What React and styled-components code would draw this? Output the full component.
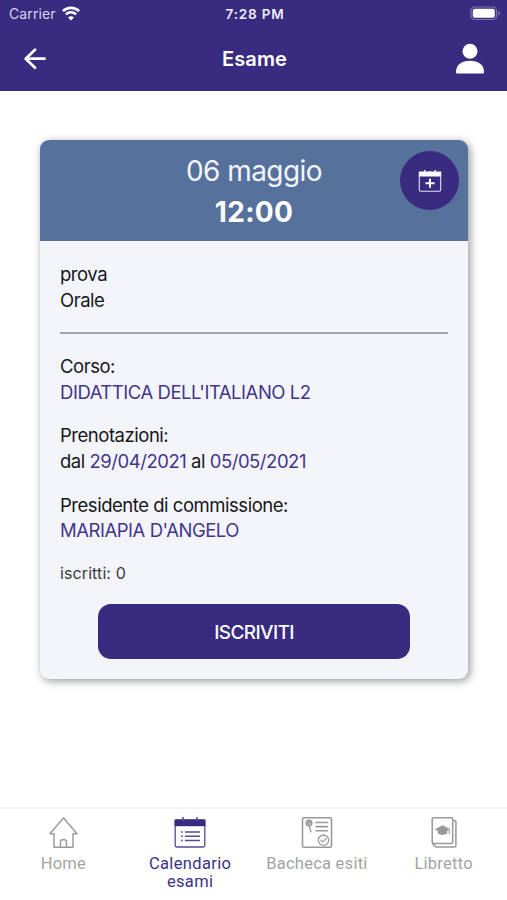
import styled, { createGlobalStyle } from 'styled-components';

const GlobalStyle = createGlobalStyle`
  * {
    box-sizing: border-box;
  }
  body {
    margin: 0;
    background: #fff;
    font-family: Inter, "Liberation Sans", sans-serif;
  }
`;

const Screen = styled.div`
  height: 900px;
  display: flex;
  flex-direction: column;
  background: #fff;
`;

const Header = styled.header`
  height: 91px;
  flex: none;
  background: #382b80;
  color: #fff;
`;

const StatusBar = styled.div`
  display: grid;
  grid-template-columns: 1fr auto 1fr;
  align-items: center;
  height: 27px;
  padding: 0 6px 0 9px;
  font-size: 14px;
  line-height: 26px;
`;

const Carrier = styled.div`
  display: flex;
  align-items: center;
  gap: 6px;
  color: #d8d3ee;
  letter-spacing: 0.1px;

  svg {
    margin-bottom: 1px;
  }
`;

const Clock = styled.div`
  padding-top: 1px;
  font-size: 13.5px;
  font-weight: 600;
  letter-spacing: 0.8px;
  color: #efedf8;
`;

const Battery = styled.svg`
  justify-self: end;
`;

const NavBar = styled.div`
  display: grid;
  grid-template-columns: 1fr auto 1fr;
  align-items: center;
  height: 63px;
  padding: 0 22px 0 24px;
`;

const Title = styled.h1`
  margin: 0;
  font-size: 20px;
  line-height: 24px;
  font-weight: 600;
  letter-spacing: 0.1px;
`;

const ProfileIcon = styled.svg`
  justify-self: end;
`;

const Main = styled.main`
  flex: 1;
  padding: 49px 39px 0 40px;
`;

const Card = styled.section`
  height: 539px;
  border-radius: 9px;
  background: #f4f5fa;
  box-shadow: 2px 2px 8px rgba(0, 0, 0, 0.42);
`;

const CardHeader = styled.div`
  position: relative;
  height: 101px;
  padding-top: 11px;
  border-radius: 9px 9px 0 0;
  background: #56719c;
  color: #fff;
  text-align: center;
`;

const Day = styled.div`
  font-size: 28px;
  line-height: 41px;
  font-weight: 400;
  letter-spacing: -0.55px;
  color: #f3f5fa;
`;

const Hour = styled.div`
  font-size: 28px;
  line-height: 41px;
  font-weight: 700;
  letter-spacing: 0.3px;
`;

const AddButton = styled.button`
  position: absolute;
  top: 11px;
  right: 9px;
  width: 59px;
  height: 59px;
  padding: 0;
  border: none;
  border-radius: 50%;
  background: #382b80;
  display: flex;
  align-items: center;
  justify-content: center;
`;

const CardBody = styled.div`
  padding: 21px 20px 0;
  display: flex;
  flex-direction: column;
`;

const Line = styled.div`
  font-size: 18.5px;
  line-height: 25.6px;
  white-space: nowrap;
  color: ${(props) => (props.$accent ? '#43358c' : '#17171a')};
  letter-spacing: -0.47px;
`;

const Accent = styled.span`
  color: #43358c;
`;

const Divider = styled.hr`
  width: 100%;
  height: 1.5px;
  margin: 19px 0 20.5px;
  border: none;
  background: #a4a5ab;
`;

const Group = styled.div`
  margin-bottom: 18.1px;
`;

const Enrolled = styled.div`
  margin-top: -0.5px;
  font-size: 16px;
  line-height: 22px;
  letter-spacing: 0.1px;
  color: #3a3a3e;
`;

const SubmitButton = styled.button`
  align-self: center;
  width: 312px;
  height: 55px;
  margin-top: 20px;
  padding: 2px 0 0;
  border: none;
  border-radius: 13px;
  background: #382b80;
  color: #fff;
  font-family: inherit;
  font-size: 19px;
  font-weight: 500;
  letter-spacing: -0.6px;
`;

const TabBar = styled.nav`
  height: 93px;
  flex: none;
  display: grid;
  grid-template-columns: repeat(4, 1fr);
  border-top: 2px solid #f3f3f4;
`;

const Tab = styled.a`
  display: flex;
  flex-direction: column;
  align-items: center;
  padding-top: 7px;
  font-family: Roboto, "Liberation Sans", sans-serif;
  font-size: 16.5px;
  line-height: 18px;
  text-align: center;
  color: ${(props) => (props.$active ? '#3d3088' : '#a3a3a3')};
  letter-spacing: ${(props) => (props.$active ? '0.35px' : '0.25px')};

  svg {
    flex: none;
    margin-bottom: 5px;
  }
`;

const WifiIcon = () => (
  <svg width="18" height="15" viewBox="0 0 18 15" fill="none" stroke="#fff" strokeWidth="2.6">
    <path d="M.9 5.2C5.4.7 12.6.7 17.1 5.2" />
    <path d="M3.9 8.4c2.9-2.8 7.3-2.8 10.2 0" />
    <path d="M9 14.4 6 11.4c1.7-1.6 4.3-1.6 6 0Z" fill="#fff" stroke="none" />
  </svg>
);

const BatteryIcon = () => (
  <Battery width="31" height="15" viewBox="0 0 31 15" fill="none">
    <rect x="1" y="1" width="25.5" height="12.5" rx="3.8" stroke="#8078ad" strokeWidth="1.2" />
    <rect x="2.8" y="2.8" width="22" height="9" rx="2" fill="#fff" />
    <path d="M28.2 5c2.2.7 2.2 3.8 0 4.5Z" fill="#8078ad" />
  </Battery>
);

const BackIcon = () => (
  <svg width="23" height="22" viewBox="0 0 23 22" fill="none" stroke="#fff" strokeWidth="2.7" strokeLinecap="round" strokeLinejoin="round">
    <path d="M11 1.7 1.7 10.7l9.3 9M2.3 10.7h18.3" />
  </svg>
);

const UserIcon = () => (
  <ProfileIcon width="30" height="32" viewBox="0 0 30 32" fill="#fff">
    <circle cx="15" cy="8.3" r="7.5" />
    <path d="M1 29C1 21.8 6.5 17.8 15 17.8S29 21.8 29 29c0 1-.5 1.500-1.500 1.500h-25C1.500 30.500 1 30 1 29Z" />
  </ProfileIcon>
);

const CalendarPlusIcon = () => (
  <svg width="24" height="24" viewBox="0 0 24 24" fill="none">
    <path d="M6.8 1v4M17.2 1v4M12 2v2" stroke="#fff" strokeWidth="1.3" />
    <path d="M.8 2.5h22.4v5H.8Z" fill="#fff" />
    <path d="M1.3 6v14.7c0 .9.6 1.5 1.5 1.5h18.4c.9 0 1.5-.6 1.5-1.5V6" stroke="#e3dff3" strokeWidth="1.1" />
    <path d="M12 9.7v9M7.5 14.2h9" stroke="#fff" strokeWidth="2" />
  </svg>
);

const HomeIcon = () => (
  <svg width="30" height="34" viewBox="0 0 30 34" fill="none" stroke="#9b9b9b" strokeWidth="1.5" strokeLinejoin="round">
    <path d="M15.500 2 2 17.700h4V31.300h19V17.700h4L15.500 2Z" />
    <path d="M12.500 31v-5.200a2 2 0 0 1 2-2h2a2 2 0 0 1 2 2V31" />
  </svg>
);

const CalendarIcon = () => (
  <svg width="32" height="34" viewBox="0 0 32 34" fill="none" stroke="#574b98" strokeWidth="1.3">
    <rect x="1.2" y="4" width="29.6" height="27" rx="1.5" />
    <path d="M.6 3.5h30.8v6.7H.6Z" fill="#382b80" stroke="none" />
    <path d="M9 1v4M23 1v4" strokeWidth="1.5" />
    <path d="M7 16h1.7M7 20.2h1.7M7 24.4h1.7M11 16h15M11 20.2h15M11 24.4h15" strokeWidth="1.5" />
  </svg>
);

const BoardIcon = () => (
  <svg width="32" height="34" viewBox="0 0 32 34" fill="none" stroke="#999" strokeWidth="1.3" strokeLinecap="round">
    <rect x="1.5" y="1.7" width="29" height="29.6" rx="1.5" strokeWidth="1.6" />
    <circle cx="8" cy="7" r="2.9" fill="#b2b2b2" />
    <path d="M7 6.5l1.5-1.5M8 9.5l2 6.5" />
    <path d="M15 6.5h11.5M15 10.6h11.5M15 14.7h11.5" strokeWidth="1.6" />
    <circle cx="22.5" cy="24.2" r="5.2" />
    <path d="m20 24.2 1.9 1.7 3.3-3.3" />
  </svg>
);

const BookletIcon = () => (
  <svg width="26" height="34" viewBox="0 0 26 34" fill="none" stroke="#999" strokeWidth="1.5" strokeLinejoin="round">
    <rect x="1.2" y="1.7" width="20.5" height="25.8" rx="1.2" />
    <path d="M21.8 4.7H24c.6 0 .9.3.9.9v24.2c0 .8-.5 1.3-1.3 1.3H5L1.3 27.4" />
    <path d="m11.5 9.3 7.8 4-7.8 4-7.8-4 7.8-4Z" fill="#999" stroke="none" />
    <path d="M6.8 14v3.6c2.5 1.9 6.9 1.9 9.4 0V14Z" fill="#999" stroke="none" />
    <path d="M18.3 13.7v4.3" strokeWidth="1" />
  </svg>
);

const tabs = [
  { label: 'Home', icon: <HomeIcon /> },
  { label: <>Calendario<br />esami</>, icon: <CalendarIcon />, active: true },
  { label: 'Bacheca esiti', icon: <BoardIcon /> },
  { label: 'Libretto', icon: <BookletIcon /> },
];

const App = () => {
  return (
    <>
      <GlobalStyle />
      <Screen>
        <Header>
          <StatusBar>
            <Carrier>Carrier <WifiIcon /></Carrier>
            <Clock>7:28 PM</Clock>
            <BatteryIcon />
          </StatusBar>
          <NavBar>
            <BackIcon />
            <Title>Esame</Title>
            <UserIcon />
          </NavBar>
        </Header>

        <Main>
          <Card>
            <CardHeader>
              <Day>06 maggio</Day>
              <Hour>12:00</Hour>
              <AddButton aria-label="Aggiungi al calendario">
                <CalendarPlusIcon />
              </AddButton>
            </CardHeader>
            <CardBody>
              <Line>prova</Line>
              <Line>Orale</Line>
              <Divider />
              <Group>
                <Line>Corso:</Line>
                <Line $accent>DIDATTICA DELL'ITALIANO L2</Line>
              </Group>
              <Group>
                <Line>Prenotazioni:</Line>
                <Line>dal <Accent>29/04/2021</Accent> al <Accent>05/05/2021</Accent></Line>
              </Group>
              <Group>
                <Line>Presidente di commissione:</Line>
                <Line $accent>MARIAPIA D'ANGELO</Line>
              </Group>
              <Enrolled>iscritti: 0</Enrolled>
              <SubmitButton>ISCRIVITI</SubmitButton>
            </CardBody>
          </Card>
        </Main>

        <TabBar>
          {tabs.map((tab, index) => (
            <Tab key={index} $active={tab.active}>
              {tab.icon}
              <span>{tab.label}</span>
            </Tab>
          ))}
        </TabBar>
      </Screen>
    </>
  );
};

export default App;
